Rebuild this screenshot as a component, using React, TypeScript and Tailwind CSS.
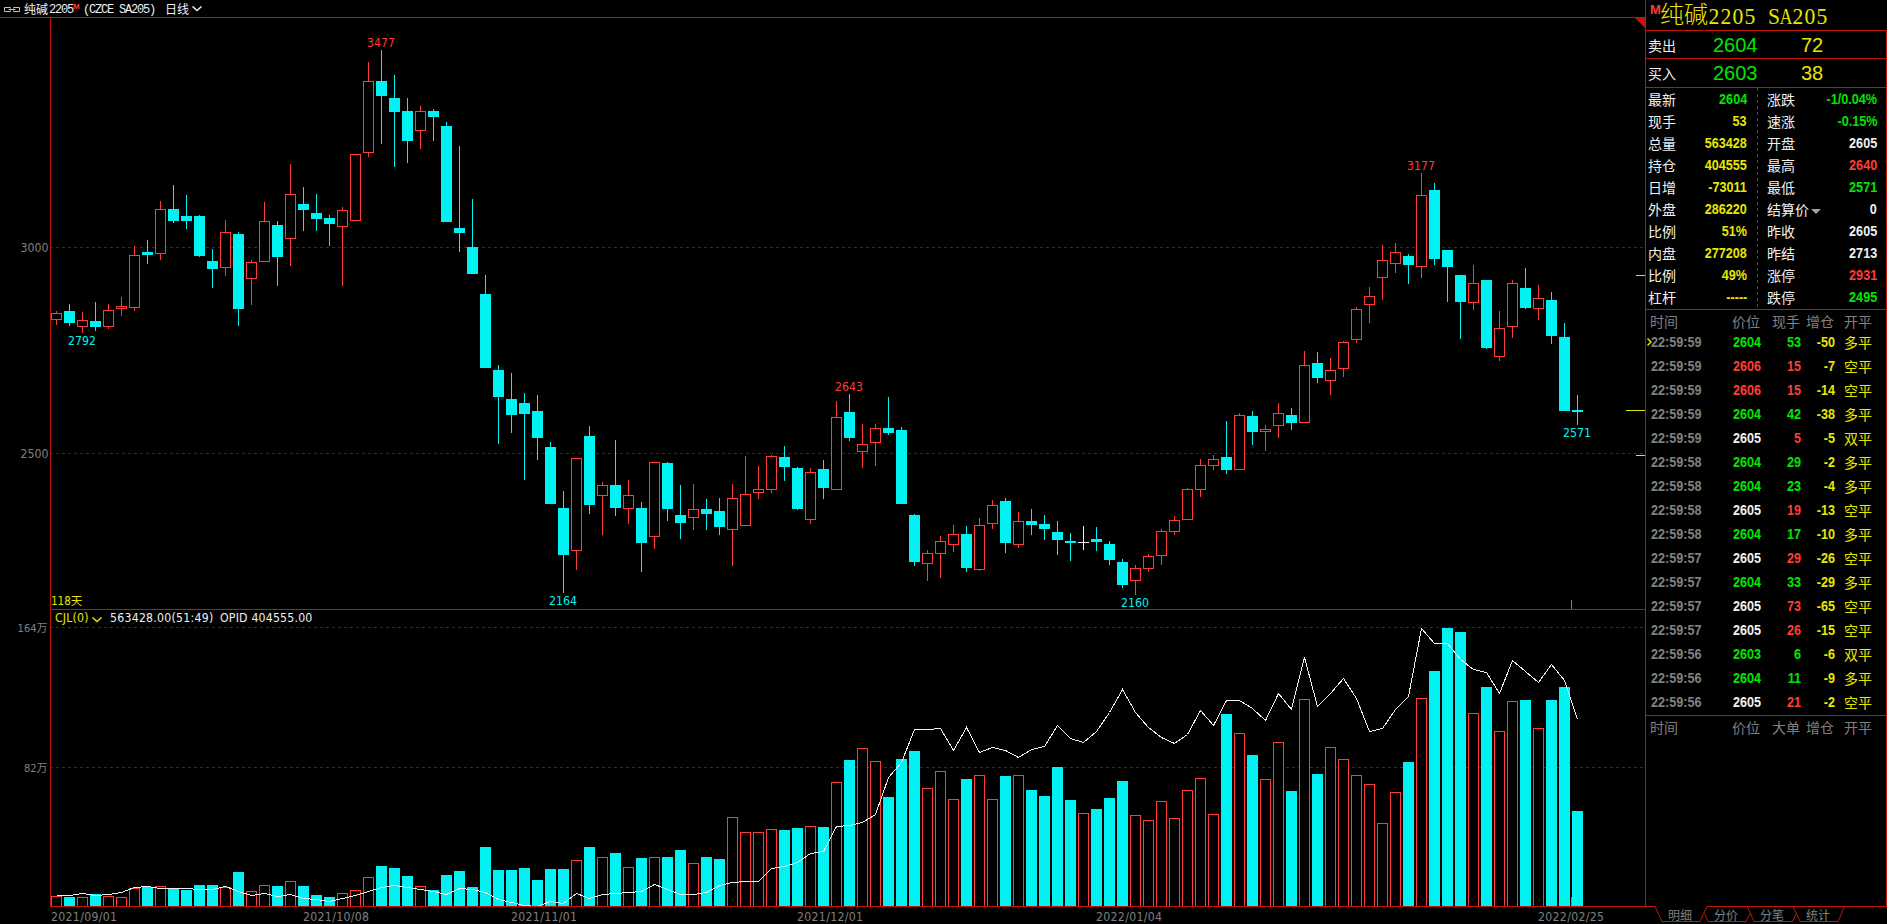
import clsx from "clsx";

type Kind = "r" | "c" | "w";

// [kind, high, body top, body bottom, low, volume top, open interest]
type Bar = [Kind, number, number, number, number, number, number];

const BARS: Bar[] = [
  ["r", 311, 313, 320, 325, 896, 895],
  ["c", 304, 311, 323, 326, 897, 895],
  ["r", 312, 320, 327, 333, 897, 893],
  ["c", 302, 321, 327, 331, 894, 895],
  ["r", 304, 310, 327, 329, 896, 894],
  ["r", 297, 306, 309, 316, 897, 892],
  ["r", 246, 255, 308, 311, 888, 887],
  ["c", 240, 252, 255, 264, 887, 886],
  ["r", 201, 209, 254, 260, 886, 888],
  ["c", 185, 209, 221, 223, 888, 888],
  ["c", 195, 216, 221, 229, 890, 888],
  ["c", 215, 216, 256, 257, 885, 889],
  ["c", 249, 261, 269, 288, 885, 889],
  ["r", 220, 232, 268, 276, 887, 886],
  ["c", 232, 234, 309, 326, 872, 891],
  ["r", 260, 262, 279, 305, 891, 895],
  ["r", 202, 221, 262, 262, 885, 893],
  ["c", 221, 225, 257, 286, 886, 896],
  ["r", 164, 194, 239, 266, 881, 894],
  ["c", 187, 204, 210, 231, 886, 898],
  ["c", 194, 213, 219, 231, 895, 899],
  ["c", 215, 218, 224, 246, 897, 901],
  ["r", 207, 210, 227, 286, 893, 898],
  ["r", 154, 154, 221, 221, 890, 895],
  ["r", 62, 81, 153, 157, 877, 891],
  ["c", 50, 81, 96, 144, 866, 887],
  ["c", 75, 98, 112, 167, 868, 885],
  ["c", 98, 111, 141, 163, 876, 887],
  ["r", 106, 111, 131, 149, 886, 889],
  ["c", 109, 111, 117, 141, 890, 891],
  ["c", 122, 126, 222, 222, 875, 894],
  ["c", 146, 228, 233, 252, 871, 888],
  ["c", 199, 247, 274, 274, 887, 889],
  ["c", 275, 294, 368, 368, 847, 892],
  ["c", 365, 370, 397, 444, 870, 899],
  ["c", 373, 399, 415, 433, 870, 902],
  ["c", 393, 403, 414, 480, 868, 905],
  ["c", 395, 411, 438, 460, 880, 906],
  ["c", 442, 447, 504, 504, 869, 901],
  ["c", 491, 508, 555, 593, 869, 903],
  ["r", 458, 458, 551, 570, 860, 893],
  ["c", 426, 436, 505, 514, 847, 898],
  ["r", 482, 485, 496, 535, 857, 894],
  ["c", 440, 485, 508, 516, 853, 893],
  ["r", 480, 495, 509, 524, 867, 892],
  ["c", 502, 508, 543, 572, 858, 891],
  ["r", 462, 462, 537, 549, 857, 884],
  ["c", 462, 463, 509, 521, 857, 889],
  ["c", 485, 515, 523, 539, 850, 894],
  ["r", 484, 509, 518, 530, 863, 894],
  ["c", 499, 509, 514, 530, 857, 892],
  ["c", 498, 511, 527, 535, 859, 885],
  ["r", 484, 498, 530, 566, 817, 882],
  ["r", 456, 494, 526, 526, 832, 881],
  ["r", 466, 489, 493, 499, 832, 881],
  ["r", 455, 456, 490, 493, 829, 868],
  ["c", 446, 457, 467, 481, 830, 866],
  ["c", 467, 468, 509, 510, 828, 862],
  ["r", 468, 472, 520, 524, 826, 853],
  ["c", 460, 469, 488, 499, 827, 851],
  ["r", 401, 417, 490, 490, 782, 826],
  ["c", 394, 412, 438, 441, 760, 825],
  ["r", 424, 444, 452, 468, 748, 822],
  ["r", 424, 428, 443, 466, 761, 814],
  ["c", 397, 428, 433, 435, 797, 777],
  ["c", 427, 430, 504, 504, 759, 762],
  ["c", 514, 515, 562, 566, 751, 729],
  ["r", 550, 553, 564, 581, 788, 729],
  ["r", 536, 541, 554, 578, 771, 728],
  ["r", 525, 534, 545, 552, 799, 750],
  ["c", 526, 534, 568, 572, 779, 727],
  ["r", 518, 525, 570, 571, 775, 752],
  ["r", 500, 505, 524, 529, 799, 747],
  ["c", 498, 501, 543, 553, 776, 750],
  ["r", 512, 521, 545, 548, 775, 757],
  ["c", 509, 521, 525, 535, 790, 749],
  ["c", 515, 524, 529, 540, 796, 746],
  ["c", 521, 532, 540, 555, 767, 725],
  ["c", 533, 541, 543, 561, 800, 738],
  ["w", 526, 542, 543, 550, 813, 742],
  ["c", 527, 539, 542, 551, 809, 731],
  ["c", 541, 544, 560, 565, 798, 712],
  ["c", 559, 562, 585, 588, 781, 689],
  ["r", 565, 568, 581, 595, 815, 712],
  ["r", 554, 556, 569, 572, 820, 727],
  ["r", 529, 531, 556, 565, 801, 737],
  ["r", 516, 520, 532, 535, 818, 743],
  ["r", 488, 489, 520, 520, 790, 734],
  ["r", 459, 465, 490, 497, 778, 710],
  ["r", 455, 459, 466, 470, 814, 725],
  ["c", 421, 457, 470, 474, 714, 700],
  ["r", 413, 415, 470, 470, 733, 700],
  ["c", 411, 416, 432, 445, 755, 708],
  ["r", 425, 429, 432, 451, 779, 720],
  ["r", 403, 413, 426, 438, 742, 693],
  ["c", 408, 415, 423, 430, 791, 709],
  ["r", 351, 365, 423, 423, 699, 657],
  ["c", 352, 363, 378, 383, 774, 706],
  ["r", 358, 370, 381, 395, 747, 693],
  ["r", 341, 342, 369, 377, 759, 678],
  ["r", 307, 309, 340, 343, 775, 698],
  ["r", 287, 296, 305, 323, 784, 731],
  ["r", 245, 260, 278, 300, 823, 728],
  ["r", 243, 252, 264, 273, 792, 709],
  ["c", 254, 256, 265, 284, 762, 696],
  ["r", 173, 195, 267, 278, 698, 628],
  ["c", 183, 190, 259, 265, 671, 643],
  ["c", 250, 250, 267, 302, 628, 643],
  ["c", 275, 275, 302, 339, 632, 659],
  ["r", 265, 283, 303, 310, 713, 669],
  ["c", 280, 280, 348, 349, 687, 672],
  ["r", 311, 328, 357, 361, 731, 693],
  ["r", 280, 283, 327, 338, 701, 660],
  ["c", 268, 288, 308, 309, 700, 671],
  ["r", 285, 298, 309, 320, 728, 682],
  ["c", 292, 300, 336, 344, 700, 664],
  ["c", 323, 337, 411, 411, 687, 680],
  ["c", 395, 410, 412, 425, 811, 719],
];

const STEP = 13;
const LEFT = 51;
const BODY = 11;
const BASE = 906;

const COLORS: Record<Kind, string> = { r: "#ff3c38", c: "#00f2f2", w: "#f0f0f0" };

const EXTREMES = [
  { x: 381, y: 47, text: "3477", kind: "r" },
  { x: 82, y: 345, text: "2792", kind: "c" },
  { x: 563, y: 605, text: "2164", kind: "c" },
  { x: 849, y: 391, text: "2643", kind: "r" },
  { x: 1135, y: 607, text: "2160", kind: "c" },
  { x: 1421, y: 170, text: "3177", kind: "r" },
  { x: 1577, y: 437, text: "2571", kind: "c" },
] as const;

const DATES = [
  { x: 51, text: "2021/09/01" },
  { x: 303, text: "2021/10/08" },
  { x: 511, text: "2021/11/01" },
  { x: 797, text: "2021/12/01" },
  { x: 1096, text: "2022/01/04" },
  { x: 1538, text: "2022/02/25" },
];

const GREEN = "text-[#00e600]";
const YELLOW = "text-[#e6e600]";
const RED = "text-[#ff3c38]";
const WHITE = "text-[#f0f0f0]";

const QUOTES_LEFT = [
  ["最新", "2604", GREEN],
  ["现手", "53", YELLOW],
  ["总量", "563428", YELLOW],
  ["持仓", "404555", YELLOW],
  ["日增", "-73011", YELLOW],
  ["外盘", "286220", YELLOW],
  ["比例", "51%", YELLOW],
  ["内盘", "277208", YELLOW],
  ["比例", "49%", YELLOW],
  ["杠杆", "-----", YELLOW],
];

const QUOTES_RIGHT = [
  ["涨跌", "-1/0.04%", GREEN],
  ["速涨", "-0.15%", GREEN],
  ["开盘", "2605", WHITE],
  ["最高", "2640", RED],
  ["最低", "2571", GREEN],
  ["结算价", "0", WHITE],
  ["昨收", "2605", WHITE],
  ["昨结", "2713", WHITE],
  ["涨停", "2931", RED],
  ["跌停", "2495", GREEN],
];

const TICKS = [
  ["22:59:59", "2604", GREEN, "53", GREEN, "-50", "多平"],
  ["22:59:59", "2606", RED, "15", RED, "-7", "空平"],
  ["22:59:59", "2606", RED, "15", RED, "-14", "空平"],
  ["22:59:59", "2604", GREEN, "42", GREEN, "-38", "多平"],
  ["22:59:59", "2605", WHITE, "5", RED, "-5", "双平"],
  ["22:59:58", "2604", GREEN, "29", GREEN, "-2", "多平"],
  ["22:59:58", "2604", GREEN, "23", GREEN, "-4", "多平"],
  ["22:59:58", "2605", WHITE, "19", RED, "-13", "空平"],
  ["22:59:58", "2604", GREEN, "17", GREEN, "-10", "多平"],
  ["22:59:57", "2605", WHITE, "29", RED, "-26", "空平"],
  ["22:59:57", "2604", GREEN, "33", GREEN, "-29", "多平"],
  ["22:59:57", "2605", WHITE, "73", RED, "-65", "空平"],
  ["22:59:57", "2605", WHITE, "26", RED, "-15", "空平"],
  ["22:59:56", "2603", GREEN, "6", GREEN, "-6", "双平"],
  ["22:59:56", "2604", GREEN, "11", GREEN, "-9", "多平"],
  ["22:59:56", "2605", WHITE, "21", RED, "-2", "空平"],
];

const CHART_FONT = "font-['DejaVu_Sans_Condensed','Noto_Sans','Noto_Sans_CJK_SC',sans-serif] text-[12.2px]";
const CJK = "font-['Noto_Sans_CJK_SC',sans-serif]";
const NUM = "font-['Liberation_Sans',sans-serif] font-bold text-sm";

function GridLine({ y }: { y: number }) {
  return <path d={`M50 ${y + 0.5}H1643`} stroke="#8c0808" strokeDasharray="3 3" />;
}

function Candle({ bar, index }: { bar: Bar; index: number }) {
  const [kind, high, top, bottom, low] = bar;
  const x = LEFT + index * STEP;
  const color = COLORS[kind];
  return (
    <g>
      {top > high && <rect x={x + 5} y={high} width={1} height={top - high} fill={color} />}
      {low > bottom && <rect x={x + 5} y={bottom} width={1} height={low - bottom} fill={color} />}
      {kind === "r" ? (
        <rect x={x + 0.5} y={top + 0.5} width={BODY - 1} height={bottom - top - 1} fill="#000" stroke={color} />
      ) : (
        <rect x={x} y={top} width={BODY} height={bottom - top} fill={color} />
      )}
    </g>
  );
}

function VolumeBar({ bar, index }: { bar: Bar; index: number }) {
  const x = LEFT + index * STEP;
  const top = bar[5];
  return bar[0] === "c" ? (
    <rect x={x} y={top} width={BODY} height={BASE - top} fill={COLORS.c} />
  ) : (
    <rect x={x + 0.5} y={top + 0.5} width={BODY - 1} height={BASE - top} fill="#000" stroke={COLORS.r} />
  );
}

function PriceChart() {
  return (
    <svg width={1645} height={592} viewBox="0 17 1645 592" className={clsx("block", CHART_FONT)}>
      <GridLine y={247} />
      <GridLine y={453} />
      <path d="M0 17.5H1645M50.5 17V609" stroke="#c41408" fill="none" />
      <path d="M1634 17H1645V28Z" fill="#c41408" />
      {BARS.map((bar, i) => (
        <Candle key={i} bar={bar} index={i} />
      ))}
      {EXTREMES.map((e) => (
        <text key={e.text} x={e.x} y={e.y} textAnchor="middle" fill={COLORS[e.kind]}>
          {e.text}
        </text>
      ))}
      <text x={48.5} y={252} textAnchor="end" fill="#808080">3000</text>
      <text x={48.5} y={458} textAnchor="end" fill="#808080">2500</text>
      <text x={51} y={604.5} fill="#e6e600" className="text-[11.5px]">118天</text>
      <path d="M1636 275.5H1645M1626 410.5H1645M1636 455.5H1645" stroke="#e6e600" />
      <path d="M1571.5 600V609" stroke="#808080" />
    </svg>
  );
}

function VolumeChart() {
  const line = BARS.map((bar, i) => `${LEFT + 5.5 + i * STEP},${bar[6] + 0.5}`).join(" ");
  return (
    <svg width={1645} height={315} viewBox="0 609 1645 315" className={clsx("block", CHART_FONT)}>
      <GridLine y={627} />
      <GridLine y={767} />
      {BARS.map((bar, i) => (
        <VolumeBar key={i} bar={bar} index={i} />
      ))}
      <polyline points={line} fill="none" stroke="#f0f0f0" shapeRendering="crispEdges" />
      <path d="M50 609.5H1645M50.5 609V907M50 906.5H1645" stroke="#c41408" fill="none" />
      <path d="M1571.5 897V906" stroke="#808080" />
      <text x={47.5} y={631.5} textAnchor="end" fill="#808080" className="text-[11px]">164万</text>
      <text x={47.5} y={771.5} textAnchor="end" fill="#808080" className="text-[11px]">82万</text>
      {DATES.map((d) => (
        <text key={d.text} x={d.x} y={921} fill="#808080" textLength={66}>
          {d.text}
        </text>
      ))}
    </svg>
  );
}

function ChevronDown({ className }: { className?: string }) {
  return (
    <svg width={10} height={6} viewBox="0 0 10 6" fill="none" stroke="currentColor" strokeWidth={1.5} className={className}>
      <path d="M0.5 0.5 5 4.5 9.5 0.5" />
    </svg>
  );
}

function TopBar() {
  return (
    <div className={clsx("flex h-[17px] items-center pl-1 text-xs leading-[17px] text-[#f0f0f0]", CJK)}>
      <svg width={16} height={5} viewBox="0 0 16 5" fill="none" stroke="#c0c0c0" className="mr-1 mt-px shrink-0">
        <path d="M6.5 1.5V0.5H0.5V4.5H6.5V3.5M9.5 1.5V0.5H15.5V4.5H9.5V3.5M4.5 2.5H11.5" />
      </svg>
      <span className="w-[25px]">纯碱</span>
      <span className="mt-[3px] w-6 font-['Liberation_Mono',monospace] tracking-[-1.2px]">2205</span>
      <span className="mb-1 w-2.5 font-['Liberation_Sans',sans-serif] text-[8px] font-bold leading-none text-[#ff3c38]">M</span>
      <span className="mt-[3px] w-[82px] whitespace-pre font-['Liberation_Mono',monospace] tracking-[-1.2px]">(CZCE SA205)</span>
      <span>日线</span>
      <ChevronDown className="ml-[3px]" />
    </div>
  );
}

function ChartArea() {
  return (
    <div className="w-[1645px] shrink-0">
      <TopBar />
      <PriceChart />
      <div className="relative">
        <VolumeChart />
        <div className={clsx("absolute left-[55px] top-px flex h-4 items-center whitespace-pre", CHART_FONT)}>
          <span className="w-[37px] tracking-[0.2px] text-[#e6e600]">CJL(0)</span>
          <ChevronDown className="mr-2 mt-1 text-[#e6e600]" />
          <span className="w-[110px] tracking-[0.25px] text-[#f0f0f0]">563428.00(51:49)</span>
          <span className="tracking-[0.2px] text-[#f0f0f0]">OPID 404555.00</span>
        </div>
      </div>
    </div>
  );
}

function Title() {
  return (
    <div className={clsx("flex h-[30px] items-center pl-1 pt-px text-2xl leading-[29px]", YELLOW)}>
      <span className="mb-3 w-2.5 font-['Liberation_Sans',sans-serif] text-[13px] font-bold leading-none text-[#ff3c38]">M</span>
      <span className="font-['Liberation_Serif','Noto_Sans_CJK_SC',sans-serif] font-light">纯碱</span>
      <span className="flex pt-px font-['Liberation_Serif',serif]">
        {"2205 SA205".split("").map((ch, i) => (
          <span key={i} className={clsx("flex w-3 justify-center", ch === "A" ? "scale-x-75" : "scale-x-90")}>
            {ch}
          </span>
        ))}
      </span>
    </div>
  );
}

function DepthRow({ label, price, volume, className }: { label: string; price: string; volume: string; className: string }) {
  return (
    <div className={clsx("flex items-center border-t border-[#c41408] pl-0.5", className)}>
      <span className={clsx("w-[65px] text-sm", CJK, WHITE)}>{label}</span>
      <span className={clsx("w-[88px] font-['Liberation_Sans',sans-serif] text-xl", GREEN)}>{price}</span>
      <span className={clsx("font-['Liberation_Sans',sans-serif] text-xl", YELLOW)}>{volume}</span>
    </div>
  );
}

function QuoteColumn({ rows, className }: { rows: string[][]; className: string }) {
  return (
    <div className={className}>
      {rows.map(([label, value, color], i) => (
        <div key={i} className="flex h-[22px] items-center justify-between">
          <span className={clsx("flex items-center text-sm", CJK, WHITE)}>
            {label}
            {label === "结算价" && (
              <span className="ml-0.5 mt-1 border-x-5 border-t-5 border-x-transparent border-t-[#a0a0a0]" />
            )}
          </span>
          <span className={clsx("origin-right scale-x-90", NUM, color)}>{value}</span>
        </div>
      ))}
    </div>
  );
}

function TickHeader({ size }: { size: string }) {
  return (
    <div className={clsx("flex h-[19px] items-center border-t border-[#c41408] pl-1 pt-[3px] text-sm text-[#808080]", CJK)}>
      <span className="w-[82px]">时间</span>
      <span className="w-10">价位</span>
      <span className="w-[34px]">{size}</span>
      <span className="w-[38px]">增仓</span>
      <span>开平</span>
    </div>
  );
}

function TickRow({ tick, latest }: { tick: string[]; latest: boolean }) {
  const [time, price, priceColor, volume, volumeColor, delta, side] = tick;
  return (
    <div className={clsx("relative flex h-6 items-center pl-[5px]", NUM)}>
      {latest && (
        <svg width={5} height={8} viewBox="0 0 5 8" fill="none" stroke="#e6e600" strokeWidth={1.5} className="absolute left-px top-2">
          <path d="M0.5 0.5 4 4 0.5 7.5" />
        </svg>
      )}
      <span className="w-[82px] origin-left scale-x-90 text-[#808080]">{time}</span>
      <span className={clsx("w-[30px] origin-left scale-x-90", priceColor)}>{price}</span>
      <span className={clsx("w-[38px] origin-right scale-x-90 text-right", volumeColor)}>{volume}</span>
      <span className={clsx("w-[34px] origin-right scale-x-90 text-right", YELLOW)}>{delta}</span>
      <span className={clsx("ml-[9px] font-normal", CJK, YELLOW)}>{side}</span>
    </div>
  );
}

function Tabs() {
  return (
    <div className="relative h-[18px]">
      <svg width={242} height={18} viewBox="1645 906 242 18" fill="none" stroke="#c41408" className="absolute inset-0">
        <path d="M1645 906.5H1655L1662 921.5H1700L1707 906.5H1887" />
        <path d="M1704.5 913.5 1708 921.5H1746L1750.5 913" />
        <path d="M1747.5 907 1754 921.5H1792.5L1796.5 913" />
        <path d="M1793.5 907 1800 921.5H1838L1844.5 906.5" />
      </svg>
      <div className={clsx("flex h-[18px] items-center gap-[22px] pl-[23px] text-xs text-[#808080]", CJK)}>
        <span>明细</span>
        <span>分价</span>
        <span>分笔</span>
        <span>统计</span>
      </div>
    </div>
  );
}

function SidePanel() {
  return (
    <div className="w-[242px]">
      <div className="h-[906px] border-l border-[#c41408]">
        <Title />
        <div className="h-[876px] border-r border-[#c41408]">
          <DepthRow label="卖出" price="2604" volume="72" className="h-7" />
          <DepthRow label="买入" price="2603" volume="38" className="h-[29px]" />
          <div className="flex h-[222px] border-t border-[#c41408]">
            <QuoteColumn rows={QUOTES_LEFT} className="w-[101px] pl-0.5" />
            <svg width={1} height={220} className="ml-[10px]">
              <path d="M0.5 0V219" stroke="#c41408" strokeDasharray="3 3" />
            </svg>
            <QuoteColumn rows={QUOTES_RIGHT} className="ml-[9px] w-[110px]" />
          </div>
          <TickHeader size="现手" />
          <div className="h-[387px] pt-0.5">
            {TICKS.map((tick, i) => (
              <TickRow key={i} tick={tick} latest={i === 0} />
            ))}
          </div>
          <TickHeader size="大单" />
        </div>
      </div>
      <Tabs />
    </div>
  );
}

export default function App() {
  return (
    <div className="flex h-[924px] w-[1887px] overflow-hidden bg-black">
      <ChartArea />
      <SidePanel />
    </div>
  );
}
